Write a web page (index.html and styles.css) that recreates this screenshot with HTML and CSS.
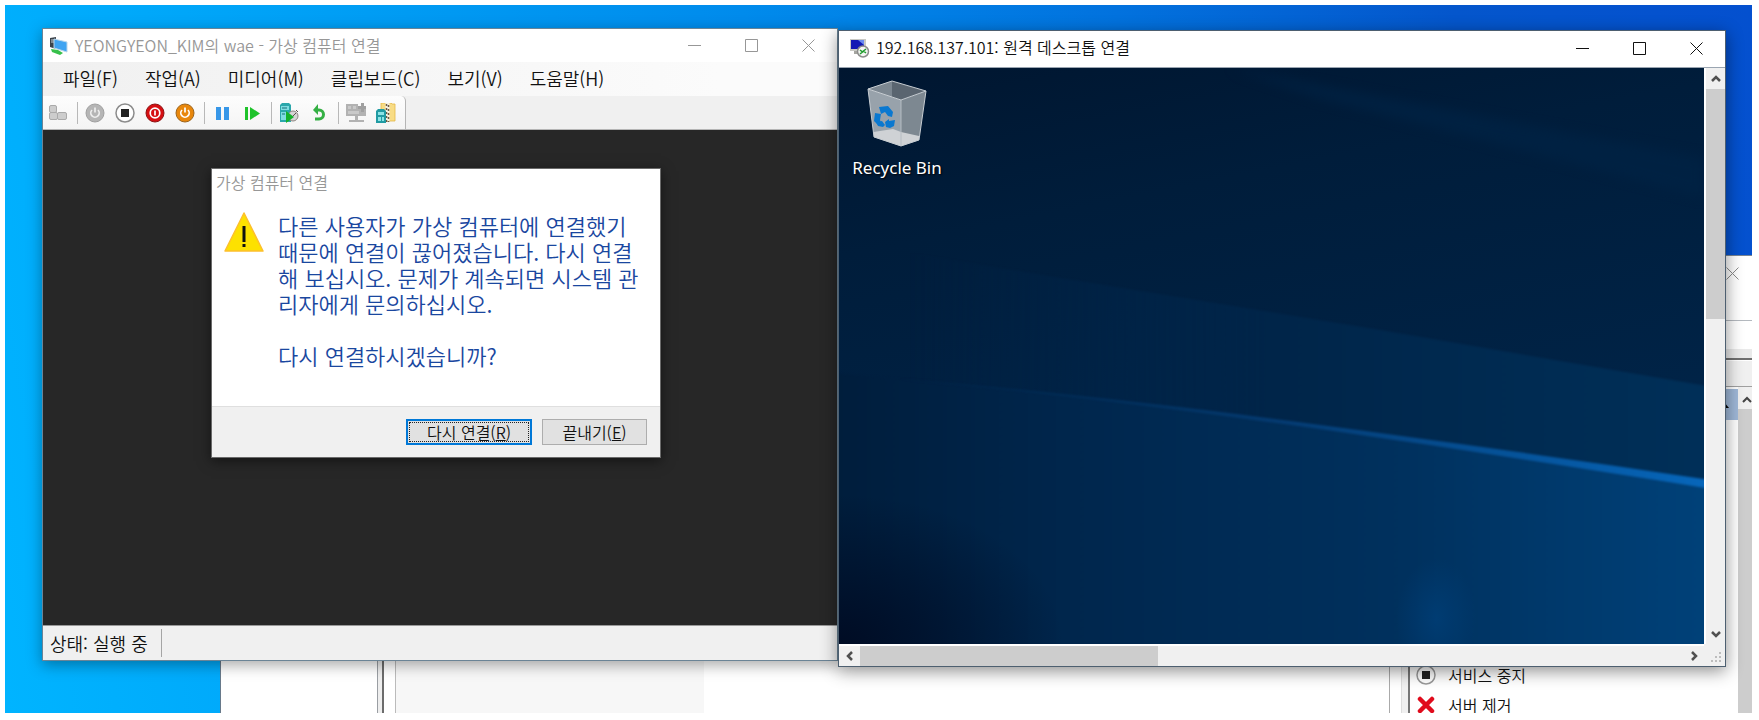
FILE: index.html
```html
<!DOCTYPE html>
<html lang="ko">
<head>
<meta charset="utf-8">
<title>가상 컴퓨터 연결</title>
<link rel="stylesheet" href="styles.css">
</head>
<body>
<main class="desktop">

  <section class="window manager">
    <header class="manager-title">
      <button class="manager-close" type="button" aria-label="닫기"><svg width="13" height="13" viewBox="0 0 13 13"><path d="M.5 .5l12 12M12.5 .5l-12 12"/></svg></button>
    </header>
    <div class="manager-menu"></div>
    <div class="manager-strip"></div>
    <div class="manager-toolbar"></div>
    <div class="manager-body">
      <div class="pane-tree"></div>
      <div class="pane-split"></div>
      <div class="pane-main"><div class="pane-column"></div></div>
      <div class="pane-gutter"></div>
      <aside class="actions">
        <div class="actions-head"><svg width="10" height="6" viewBox="0 0 10 6"><path d="M5 0l5 6H0z"/></svg></div>
        <div class="actions-space"></div>
        <ul class="actions-list">
          <li><button type="button" class="action"><svg width="20" height="20" viewBox="0 0 20 20"><circle cx="10" cy="10" r="9" fill="#fff" stroke="#999" stroke-width="1.5"/><path d="M6 6h8v8H6z" fill="#222"/></svg>서비스 중지</button></li>
          <li><button type="button" class="action"><svg width="20" height="20" viewBox="0 0 20 20"><path d="M4 4l12 12M16 4L4 16" stroke="#e00b1c" stroke-width="4.5" stroke-linecap="round"/></svg>서버 제거</button></li>
        </ul>
      </aside>
      <div class="manager-scroll"><svg width="10" height="7" viewBox="0 0 10 7"><path d="M1 6l4-4 4 4"/></svg></div>
    </div>
  </section>

  <section class="window vm">
    <header class="titlebar vm-title">
      <svg class="title-icon" width="18" height="18" viewBox="0 0 18 18">
        <path d="M0 1l6-1v12l-6-2z" fill="#3b434b"/><path d="M1 3h3M1 5h3" stroke="#c6d0d8"/>
        <path d="M4 2l13 3v10L4 11z" fill="#3fa4f2" stroke="#b9d6ea" stroke-width="1"/>
        <path d="M1 12l7 1 5 3-3 2-8-3z" fill="#37c04b"/>
      </svg>
      <h1 class="title-text">YEONGYEON_KIM의 wae - 가상 컴퓨터 연결</h1>
      <div class="controls">
        <button type="button" aria-label="최소화"><svg width="13" height="13" viewBox="0 0 13 13"><path d="M0 6.5h13"/></svg></button>
        <button type="button" aria-label="최대화"><svg width="13" height="13" viewBox="0 0 13 13"><path d="M.5 .5h12v12H.5z"/></svg></button>
        <button type="button" aria-label="닫기"><svg width="13" height="13" viewBox="0 0 13 13"><path d="M.5 .5l12 12M12.5 .5l-12 12"/></svg></button>
      </div>
    </header>
    <nav class="menu">
      <button type="button">파일(F)</button>
      <button type="button">작업(A)</button>
      <button type="button">미디어(M)</button>
      <button type="button">클립보드(C)</button>
      <button type="button">보기(V)</button>
      <button type="button">도움말(H)</button>
    </nav>
    <div class="toolbar-row">
      <div class="toolbar">
        <button type="button" aria-label="Ctrl+Alt+Del"><svg width="20" height="20" viewBox="0 0 20 20"><g fill="#cdcdcd" stroke="#aaa"><rect x="1.500" y="2.500" width="7" height="7" rx="1.500"/><rect x="1.500" y="9.500" width="8" height="7" rx="1.500"/><rect x="9.500" y="9.500" width="9" height="7" rx="1.500"/></g></svg></button>
        <i class="sep"></i>
        <button type="button" aria-label="시작"><svg width="20" height="20" viewBox="0 0 20 20"><circle cx="10" cy="10" r="9" fill="#b5b5b5" stroke="#a0a0a0"/><path d="M7 7a4.200 4.200 0 1 0 6 0M10 4.500v5" fill="none" stroke="#eee" stroke-width="1.700"/></svg></button>
        <button type="button" aria-label="끄기"><svg width="20" height="20" viewBox="0 0 20 20"><circle cx="10" cy="10" r="9" fill="#fff" stroke="#8c8c8c" stroke-width="1.500"/><path d="M6 6h8v8H6z" fill="#222"/></svg></button>
        <button type="button" aria-label="종료"><svg width="20" height="20" viewBox="0 0 20 20"><circle cx="10" cy="10" r="9" fill="#d60f12" stroke="#8d1213"/><circle cx="10" cy="10" r="4.800" fill="none" stroke="#fff" stroke-width="1.700"/><path d="M10 7.500v5" stroke="#fff" stroke-width="1.700"/></svg></button>
        <button type="button" aria-label="저장"><svg width="20" height="20" viewBox="0 0 20 20"><circle cx="10" cy="10" r="9" fill="#e8870c" stroke="#9d641b"/><path d="M7 7a4.200 4.200 0 1 0 6 0M10 4.500v5" fill="none" stroke="#fff" stroke-width="1.700"/></svg></button>
        <i class="sep"></i>
        <button type="button" aria-label="일시 중지"><svg width="20" height="20" viewBox="0 0 20 20"><path d="M4 4h5v13H4zM12 4h5v13h-5z" fill="#3797e8"/></svg></button>
        <button type="button" aria-label="다시 시작"><svg width="20" height="20" viewBox="0 0 20 20"><path d="M3 4h3v13H3zM8 4l10 6.500L8 17z" fill="#1fc32b"/></svg></button>
        <i class="sep"></i>
        <button type="button" aria-label="검사점"><svg width="20" height="20" viewBox="0 0 20 20"><path d="M1 2l2-2h7l2 2v17H1z" fill="#2ba7ab"/><path d="M2 3h8v4H2zM2 9h5v8H2z" fill="#7fdce0"/><path d="M3 5h5M3 11h3" stroke="#176f78"/><circle cx="14" cy="13" r="5" fill="#d5d5d5" stroke="#8c8580"/><path d="M14 13l3-3M17 7l2 2" stroke="#5e504c"/><path d="M7 8l8 6-8 6z" fill="#14b12a"/></svg></button>
        <button type="button" aria-label="되돌리기"><svg width="20" height="20" viewBox="0 0 20 20"><path d="M7 7h3a4.500 4.500 0 0 1 0 9H6" fill="none" stroke="#35b044" stroke-width="3"/><path d="M9 1v11L4 7z" fill="#35b044"/></svg></button>
        <i class="sep"></i>
        <button type="button" aria-label="고급 세션"><svg width="20" height="20" viewBox="0 0 20 20"><path d="M0 1h12v3h8v9H0z" fill="#b2b2b2"/><path d="M2 3h3v3H2zM7 3h3v3H7zM2 8h11v3H2z" fill="#c9c9c9"/><path d="M15 0h3v3h2v3h-2v3h-3V6h-3V3h3z" fill="#a0a0a0"/><path d="M9 13h3v4h6v2H3v-2h6z" fill="#b2b2b2"/></svg></button>
        <button type="button" aria-label="공유"><svg width="20" height="20" viewBox="0 0 20 20"><path d="M5 0h10l1 1h3v17H5z" fill="#f8dc85" stroke="#e3b847" stroke-width=".8"/><path d="M11.500 0v18" stroke="#f6f0e0" stroke-width="4"/><path d="M10.500 1v18M12.500 2v17" stroke="#6b5a44" stroke-width="1.500" stroke-dasharray="2 2"/><path d="M0 8l2-2h6l2 2v12H0z" fill="#219ba3"/><path d="M2 9h6v3H2zM2 14h3v4H2zM6 14h2v4H6z" fill="#8ce4e6"/></svg></button>
      </div>
    </div>
    <div class="vm-screen"></div>
    <footer class="status"><span class="status-text">상태: 실행 중</span></footer>
  </section>

  <section class="window dialog" role="dialog" aria-labelledby="dialog-title">
    <h2 class="dialog-title" id="dialog-title">가상 컴퓨터 연결</h2>
    <div class="dialog-body">
      <svg class="warning" width="40" height="40" viewBox="0 0 40 40"><path d="M20 1l19 38H1z" fill="#fde100" stroke="#fdbf2d" stroke-width="1.500" stroke-linejoin="round"/><path d="M18.500 14h3v16h-3zM18.500 32h3v3h-3z" fill="#111"/></svg>
      <div class="message">
        <p>다른 사용자가 가상 컴퓨터에 연결했기<br>때문에 연결이 끊어졌습니다. 다시 연결<br>해 보십시오. 문제가 계속되면 시스템 관<br>리자에게 문의하십시오.</p>
        <p>다시 연결하시겠습니까?</p>
      </div>
    </div>
    <footer class="dialog-foot">
      <button type="button" class="push primary">다시 연결(<u>R</u>)</button>
      <button type="button" class="push">끝내기(<u>E</u>)</button>
    </footer>
  </section>

  <section class="window rdp">
    <header class="titlebar rdp-title">
      <svg class="title-icon" width="20" height="20" viewBox="0 0 20 20">
        <path d="M0 1h16v12H0z" fill="#c9c9c4"/><path d="M1 2h13v9H1z" fill="#1218b4"/><path d="M8 2h6v5z" fill="#6a8af0"/><path d="M4 13h7v3H4z" fill="#a5a5a0"/>
        <circle cx="13" cy="13.500" r="5.500" fill="#f4f6f3" stroke="#8b8b8b" stroke-width="1.500"/><path d="M10 12l2.500 2-2.500 2M16 11l-2.500 2 2.500 2" fill="none" stroke="#1f9c2d" stroke-width="1.500"/>
      </svg>
      <h1 class="title-text">192.168.137.101: 원격 데스크톱 연결</h1>
      <div class="controls">
        <button type="button" aria-label="최소화"><svg width="13" height="13" viewBox="0 0 13 13"><path d="M0 6.500h13"/></svg></button>
        <button type="button" aria-label="최대화"><svg width="13" height="13" viewBox="0 0 13 13"><path d="M.5 .5h12v12H.5z"/></svg></button>
        <button type="button" aria-label="닫기"><svg width="13" height="13" viewBox="0 0 13 13"><path d="M.5 .5l12 12M12.500 .5l-12 12"/></svg></button>
      </div>
    </header>
    <div class="remote">
      <svg class="wallpaper" viewBox="0 0 866 576" preserveAspectRatio="none">
        <defs>
          <linearGradient id="sky" x1="0" y1="0" x2="0.300" y2="1"><stop offset="0" stop-color="#001630"/><stop offset=".3" stop-color="#001d3b"/><stop offset="1" stop-color="#00264c"/></linearGradient>
          <linearGradient id="band" x1="0" y1="0" x2="1" y2="0"><stop offset=".1" stop-color="#00264b" stop-opacity="0"/><stop offset=".5" stop-color="#002549"/><stop offset="1" stop-color="#003059"/></linearGradient>
          <linearGradient id="floor" x1="0" y1="0" x2="1" y2="0"><stop offset="0" stop-color="#001d3b"/><stop offset=".3" stop-color="#00274e"/><stop offset=".65" stop-color="#00315e"/><stop offset="1" stop-color="#00427a"/></linearGradient>
          <linearGradient id="ray" x1="0" y1="0" x2="1" y2="0"><stop offset="0" stop-color="#00335f" stop-opacity="0"/><stop offset=".45" stop-color="#043a70"/><stop offset="1" stop-color="#0768bd"/></linearGradient>
          <radialGradient id="shade" cx="0" cy="1" r=".26"><stop offset="0" stop-color="#000c24"/><stop offset="1" stop-color="#000c24" stop-opacity="0"/></radialGradient>
          <radialGradient id="glow" cx=".5" cy=".5" r=".5"><stop offset="0" stop-color="#00407a" stop-opacity=".7"/><stop offset="1" stop-color="#00407a" stop-opacity="0"/></radialGradient>
          <filter id="soft" x="-10%" y="-20%" width="120%" height="140%" color-interpolation-filters="sRGB"><feGaussianBlur stdDeviation="6"/></filter>
          <filter id="fine" x="-10%" y="-20%" width="120%" height="140%" color-interpolation-filters="sRGB"><feGaussianBlur stdDeviation="1"/></filter>
        </defs>
        <path d="M0 0h866v576H0z" fill="url(#sky)"/>
        <path d="M390 0L866 90v40L480 30z" fill="#002345" opacity=".7" filter="url(#soft)"/>
        <path d="M-20 170L210 208 542 262 880 320V420L-20 310z" fill="url(#band)" filter="url(#fine)"/>
        <path d="M-20 304C300 330 560 368 880 418V596H-20z" fill="url(#floor)" filter="url(#fine)"/>
        <path d="M60 310C300 330 560 366 880 413v9C560 371 300 332 60 312z" fill="url(#ray)" filter="url(#fine)"/>
        <ellipse cx="598" cy="550" rx="40" ry="60" fill="url(#glow)"/>
        <path d="M0 0h866v576H0z" fill="url(#shade)"/>
      </svg>
      <button type="button" class="shortcut">
        <svg width="60" height="67" viewBox="0 0 60 67">
          <path d="M1 9L25 1l34 10-25 9z" fill="#5a6570"/><path d="M1 9L25 1v17z" fill="#7c8791"/>
          <path d="M1 9l33 11v46L7 57z" fill="#98a2ab"/><path d="M59 11L34 20v46l18-6z" fill="#7d8891"/>
          <path d="M7 57l-.5-5L26 49l8 3 18 4v4L34 66z" fill="#cfd2d5"/><path d="M34 20v46" stroke="#b5bcc2" stroke-width="1"/>
          <path d="M1 9L25 1l34 10-25 9zM1 9l6 48 27 9 18-6 7-49" fill="none" stroke="#c6ccd1" stroke-width="1"/>
          <g fill="#0a78d0"><path d="M12 27l9-1 5 6-1 5-4-1-3-4-4 2z"/><path d="M8 33l6 1-1 6 2 5-4 0-4-4z"/><path d="M9 42l6-1 3 4-2 2-5-1z"/><path d="M18 42l4-3v2l6-1-1 6-4 2-4-1z"/></g>
        </svg>
        <span>Recycle Bin</span>
      </button>
    </div>
    <div class="vscroll">
      <button type="button" aria-label="위로"><svg width="10" height="8" viewBox="0 0 10 8"><path d="M1 6l4-4 4 4"/></svg></button>
      <div class="vthumb"></div>
      <button type="button" class="to-end" aria-label="아래로"><svg width="10" height="8" viewBox="0 0 10 8"><path d="M1 2l4 4 4-4"/></svg></button>
    </div>
    <div class="hscroll">
      <button type="button" aria-label="왼쪽"><svg width="8" height="10" viewBox="0 0 8 10"><path d="M6 1L2 5l4 4"/></svg></button>
      <div class="hthumb"></div>
      <button type="button" class="to-end" aria-label="오른쪽"><svg width="8" height="10" viewBox="0 0 8 10"><path d="M2 1l4 4-4 4"/></svg></button>
    </div>
    <div class="grip"><svg width="12" height="12" viewBox="0 0 12 12"><path d="M8 0h2v2H8zM4 4h2v2H4zM8 4h2v2H8zM0 8h2v2H0zM4 8h2v2H4zM8 8h2v2H8z"/></svg></div>
  </section>

</main>
</body>
</html>
```
FILE: styles.css
```css
* { box-sizing: border-box; }

body {
  margin: 0;
  height: 100vh;
  padding: 5px 7px 7px 5px;
  background: #fff;
  font-family: "Noto Sans CJK KR", "Noto Sans", sans-serif;
  font-weight: 350;
  font-size: 16px;
  color: #111;
}

h1, h2, p, ul { margin: 0; padding: 0; font-weight: inherit; }
svg { display: block; flex: none; }

button {
  margin: 0;
  padding: 0;
  border: 0;
  background: none;
  font: inherit;
  color: inherit;
  display: flex;
  align-items: center;
  justify-content: center;
  white-space: nowrap;
}

.desktop {
  position: relative;
  height: 100%;
  overflow: hidden;
  background: linear-gradient(80deg, #00b4ff 0%, #00aafb 12%, #009bf3 28%, #008bec 46%, #0272de 66%, #0456cc 84%, #0450cf 100%);
}

.window {
  position: absolute;
  display: flex;
  flex-direction: column;
}

/* Server manager */
.manager {
  inset: 250px 0 0 215px;
  background: #fff;
  border-top: 1px solid #7a8592;
  border-left: 1px solid #67798a;
}
.manager-title { height: 65px; display: flex; justify-content: flex-end; padding: 11px 13px; border-bottom: 1px solid #b4b9bf; }
.manager-close { width: 13px; height: 13px; }
.manager-close path { stroke: #8b8b8b; fill: none; }
.manager-menu { height: 28px; }
.manager-strip { height: 11px; background: #eaeaea; border-bottom: 2px solid #6f6f6f; }
.manager-toolbar { height: 26px; margin-top: 1px; background: #f0f0f0; border-bottom: 1px solid #a0a0a0; }
.manager-body {
  flex: 1;
  min-height: 0;
  display: grid;
  grid-template-columns: 156px 19px 1fr 21px 328px 14px;
  overflow: hidden;
}
.pane-split { border-left: 1px solid #9a9ea3; border-right: 1px solid #bbb; background: linear-gradient(90deg, #eee 0 4px, #6c6c6c 4px 6px, #fff 6px); }
.pane-column { width: 308px; height: 100%; background: #f7f7f7; }
.pane-gutter { border-left: 1px solid #aaa; border-right: 2px solid #777; background: linear-gradient(90deg, #fff 0 11px, #ddd 11px 12px, #f0f0f0 12px); }
.actions { padding-top: 2px; overflow: hidden; }
.actions-head { height: 31px; background: #9fb8d8; display: flex; align-items: center; justify-content: flex-end; padding-right: 9px; }
.actions-space { height: 240px; }
.actions-list { list-style: none; }
.action { height: 30px; padding: 0 6px; gap: 12px; line-height: 20px; }
.manager-scroll { background: linear-gradient(#f0f0f0 0 22px, #cdcdcd 22px); padding: 9px 4px; }
.manager-scroll path { fill: none; stroke: #444; stroke-width: 2; }

/* Shared title bar */
.titlebar { display: flex; align-items: center; background: #fff; flex: none; }
.title-text { font-size: 16px; line-height: 22px; padding-bottom: 2px; white-space: nowrap; }
.controls { margin-left: auto; display: flex; align-self: stretch; }
.controls button { width: 57px; }
.controls path { fill: none; stroke: currentColor; stroke-width: 1; }

/* Virtual machine window */
.vm {
  inset: 23px 914px 52px 37px;
  border: 1px solid #6b8496;
  background: #f0f0f0;
  box-shadow: 0 4px 14px rgba(0, 0, 0, .35);
}
.vm-title { height: 33px; padding-left: 7px; gap: 7px; color: #979797; }
.menu {
  height: 34px;
  display: flex;
  align-items: center;
  padding: 0 20px 2px;
  gap: 27px;
  background: linear-gradient(90deg, #f0f0f0, #fbfbfb 85%);
  font-size: 18px;
  line-height: 24px;
}
.toolbar-row { height: 34px; border-bottom: 1px solid #b5b5b5; display: flex; }
.toolbar {
  display: flex;
  align-items: center;
  padding-right: 4px;
  background: linear-gradient(#fdfdfd, #f4f4f4);
  border-right: 1px solid #b5b5b5;
  border-radius: 0 5px 0 0;
}
.toolbar button { width: 30px; height: 30px; }
.sep { width: 1px; height: 22px; margin: 0 2px 0 4px; background: #b8b8b8; }
.vm-screen { flex: 1; background: #272727; }
.status { height: 35px; border-top: 1px solid #999; display: flex; padding: 3px 7px; font-size: 18px; line-height: 28px; }
.status-text { padding-right: 13px; border-right: 1px solid #a5a5a5; }

/* Reconnect dialog */
.dialog {
  left: 206px;
  top: 163px;
  width: 450px;
  background: #fff;
  border: 1px solid #6a6a6a;
  box-shadow: 0 3px 12px rgba(0, 0, 0, .5);
}
.dialog-title { height: 29px; padding: 1px 4px; line-height: 24px; font-size: 16px; color: #979797; }
.dialog-body { display: flex; gap: 14px; padding: 14px 12px 38px; }
.message { display: grid; gap: 26px; font-size: 22px; line-height: 26px; color: #1a479f; white-space: nowrap; }
.dialog-foot { display: flex; justify-content: flex-end; gap: 10px; padding: 12px 13px; background: #f0f0f0; border-top: 1px solid #dfdfdf; }
.push { width: 105px; height: 26px; background: #e1e1e1; border: 1px solid #adadad; line-height: 20px; }
.primary { width: 126px; border: 2px solid #0078d7; outline: 1px dotted #222; outline-offset: -4px; }

/* Remote desktop window */
.rdp {
  inset: 25px 26px 46px 833px;
  display: grid;
  grid-template-columns: 1fr 21px;
  grid-template-rows: 37px 1fr 22px;
  background: #f0f0f0;
  border: 1px solid #4d5f70;
  box-shadow: 0 4px 16px rgba(0, 0, 0, .45);
}
.rdp-title { grid-column: 1 / 3; padding: 0 0 2px 11px; gap: 6px; border-bottom: 1px solid #9aa5b1; }
.remote { position: relative; overflow: hidden; background: #001c3a; }
.wallpaper { position: absolute; inset: 0; width: 100%; height: 100%; }
.shortcut {
  position: relative;
  width: 100px;
  margin: 12px 8px;
  flex-direction: column;
  gap: 9px;
  font-family: "Noto Sans", sans-serif;
  font-weight: 400;
  font-size: 17px;
  line-height: 24px;
  color: #fff;
  text-shadow: 1px 1px 2px #000;
}
.vscroll, .hscroll { display: flex; background: #f0f0f0; }
.vscroll { flex-direction: column; border-left: 2px solid #fff; }
.hscroll { border-top: 2px solid #fff; }
.vscroll button { height: 21px; flex: none; }
.hscroll button { width: 21px; flex: none; }
.vscroll path, .hscroll path { fill: none; stroke: #505050; stroke-width: 2.500; }
.vthumb { height: 40%; background: #cdcdcd; }
.hthumb { width: 298px; background: #cdcdcd; }
.vscroll .to-end { margin-top: auto; }
.hscroll .to-end { margin-left: auto; }
.grip { display: flex; align-items: flex-end; justify-content: flex-end; padding: 2px; }
.grip path { fill: #bdbdbd; }
```
